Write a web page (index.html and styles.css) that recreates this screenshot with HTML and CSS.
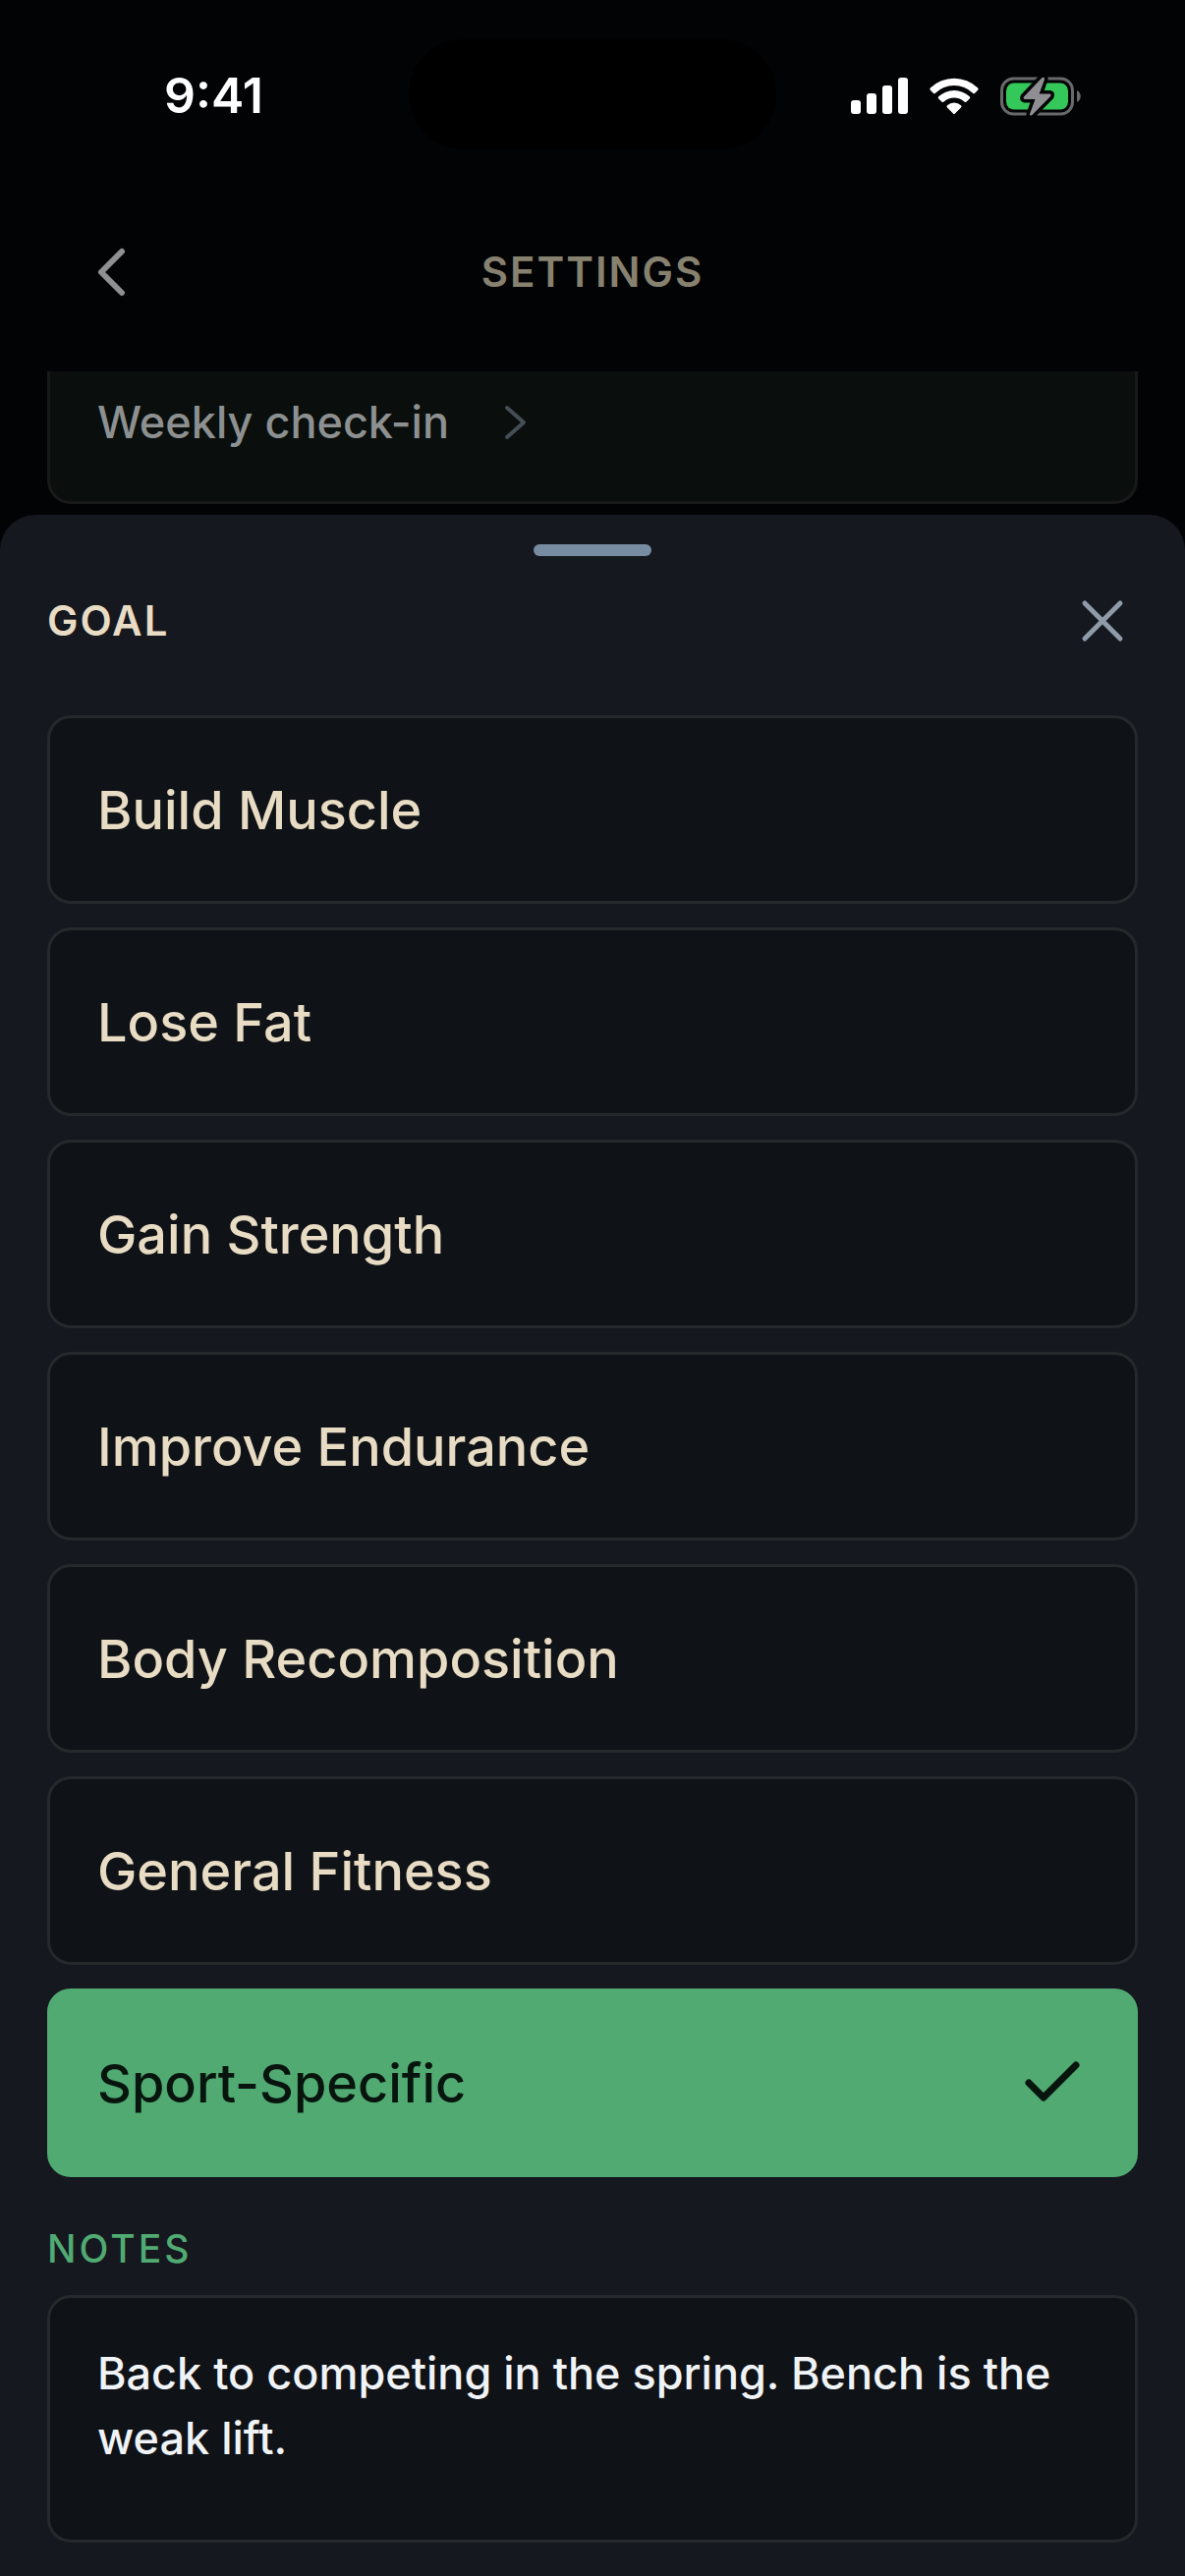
FILE: index.html
```html
<!DOCTYPE html>
<html lang="en">
<head>
    <meta charset="UTF-8">
    <meta name="viewport" content="width=device-width, initial-scale=1.0">
    <title>Settings - Goal</title>
    <link rel="stylesheet" href="styles.css">
</head>
<body>
    <div class="status-bar">
        <span class="status-time">9:41</span>
        <span class="island"></span>
        <div class="status-icons">
            <svg class="icon-signal" viewBox="0 0 58 38" aria-hidden="true">
                <rect x="0" y="23" width="10" height="14" rx="3"/>
                <rect x="16" y="16" width="10" height="21" rx="3"/>
                <rect x="32" y="8" width="10" height="29" rx="3"/>
                <rect x="48" y="0" width="10" height="37" rx="3"/>
            </svg>
            <svg class="icon-wifi" viewBox="0 0 50 38" aria-hidden="true">
                <path d="M.8 10.5a1.6 1.6 0 0 0 0 2.200l3 3a1.600 1.600 0 0 0 2.200 0a27.200 27.200 0 0 1 38 0a1.600 1.600 0 0 0 2.200 0l3-3a1.600 1.600 0 0 0 0-2.200a34.800 34.800 0 0 0-48.400 0z"/>
                <path d="M9.200 19.300a1.600 1.600 0 0 0 0 2.200l3.200 3.100a1.600 1.600 0 0 0 2.200 0a15.500 15.500 0 0 1 20.800 0a1.600 1.600 0 0 0 2.200 0l3.200-3.100a1.600 1.600 0 0 0 0-2.200a23 23 0 0 0-31.600 0z"/>
                <path d="M18 28.200a1.500 1.500 0 0 0 0 2.200l6 6.200a1.400 1.400 0 0 0 2 0l6-6.200a1.500 1.500 0 0 0 0-2.200a10.800 10.800 0 0 0-14 0z"/>
            </svg>
            <svg class="icon-battery" viewBox="0 0 83 42" aria-hidden="true">
                <rect class="battery-shell" x="1.500" y="3" width="72" height="36" rx="12"/>
                <path class="battery-shell-tip" d="M78 15c5 2 5 10 0 12z"/>
                <rect class="battery-level" x="6" y="7.500" width="63" height="27" rx="8"/>
                <path class="battery-bolt" d="M44.500 2c-.7-.6-1.700-.4-2.400.5L24 21.500c-.8 1.200-.3 2.500 1 2.500h10.500l-5.500 15c-.3 1.400 1.500 2.200 2.500 1l18.700-19c.9-1.300.3-2.500-1-2.500h-10.500L45 4c.2-.8.100-1.500-.5-2z"/>
            </svg>
        </div>
    </div>

    <header class="nav">
        <button class="back-button" type="button" aria-label="Back">
            <svg viewBox="0 0 34 50" aria-hidden="true"><path d="M28 4L7 25L28 46"/></svg>
        </button>
        <h1>Settings</h1>
    </header>

    <a class="setting-row" href="#checkin">
        <span>Weekly check-in</span>
        <svg viewBox="0 0 24 36" aria-hidden="true"><path d="M3 3L20 18L3 33"/></svg>
    </a>

    <!-- Goal sheet -->
    <main class="sheet">
        <div class="handle"></div>
        <div class="sheet-header">
            <h2 id="goalTitle">Goal</h2>
            <button class="close-button" type="button" aria-label="Close">
                <svg viewBox="0 0 42 42" aria-hidden="true"><path d="M3 3L39 39M39 3L3 39"/></svg>
            </button>
        </div>

        <div class="options" role="radiogroup" aria-labelledby="goalTitle">
            <label class="option">
                <input type="radio" name="goal">
                <span>Build Muscle</span>
            </label>
            <label class="option">
                <input type="radio" name="goal">
                <span>Lose Fat</span>
            </label>
            <label class="option">
                <input type="radio" name="goal">
                <span>Gain Strength</span>
            </label>
            <label class="option">
                <input type="radio" name="goal">
                <span>Improve Endurance</span>
            </label>
            <label class="option">
                <input type="radio" name="goal">
                <span>Body Recomposition</span>
            </label>
            <label class="option">
                <input type="radio" name="goal">
                <span>General Fitness</span>
            </label>
            <label class="option">
                <input type="radio" name="goal" checked>
                <span>Sport-Specific</span>
                <svg viewBox="0 0 56 42" aria-hidden="true"><path d="M5 21L20 36L53 3"/></svg>
            </label>
        </div>

        <label class="notes-label" for="notes">Notes</label>
        <textarea class="notes" id="notes">Back to competing in the spring. Bench is the weak lift.</textarea>
    </main>
</body>
</html>
```
FILE: styles.css
```css
* {
    margin: 0;
    padding: 0;
    box-sizing: border-box;
    font-family: Inter, "Liberation Sans", sans-serif;
}

body {
    display: flex;
    flex-direction: column;
    min-height: 100vh;
    background-color: #020305;
}

svg {
    display: block;
    overflow: visible;
    fill: none;
    stroke-linecap: round;
    stroke-linejoin: round;
}

button {
    background: none;
    border: none;
    cursor: pointer;
}

/* Status bar */
.status-bar {
    display: grid;
    grid-template-columns: 1fr 374px 1fr;
    align-items: center;
    padding: 40px 105px 0;
    height: 152px;
}

.status-time {
    padding: 2px 0 0 62px;
    color: #fff;
    font-size: 50px;
    font-weight: 600;
    line-height: 60px;
}

.island {
    height: 112px;
    border-radius: 56px;
    background-color: #000;
}

.status-icons {
    display: flex;
    justify-content: flex-end;
    align-items: center;
    gap: 22px;
    padding-top: 4px;
}

.icon-signal {
    width: 58px;
    height: 38px;
    fill: #fff;
}

.icon-wifi {
    width: 50px;
    height: 38px;
    fill: #fff;
}

.icon-battery {
    width: 83px;
    height: 42px;
}

.battery-shell {
    stroke: #68696b;
    stroke-width: 3;
}

.battery-shell-tip {
    fill: #68696b;
}

.battery-level {
    fill: #34c759;
}

.battery-bolt {
    fill: #8e8e93;
    stroke: #020305;
    stroke-width: 7;
    paint-order: stroke;
}

/* Navigation */
.nav {
    display: grid;
    grid-template-columns: 1fr auto 1fr;
    align-items: center;
    height: 226px;
    padding: 24px 96px 0;
}

.back-button svg {
    width: 34px;
    height: 50px;
    stroke: #8f9092;
    stroke-width: 6;
}

.nav h1,
.sheet h2 {
    color: #87816f;
    font-size: 42px;
    font-weight: 600;
    line-height: 52px;
    letter-spacing: 2px;
    text-transform: uppercase;
}

.setting-row {
    display: flex;
    gap: 56px;
    margin: 0 48px 11px;
    padding: 23px 48px 52px;
    border: 3px solid #171a19;
    border-top: none;
    border-radius: 0 0 24px 24px;
    background-color: #0a0e0d;
    color: #8d9090;
    font-size: 45px;
    font-weight: 500;
    line-height: 57px;
    text-decoration: none;
}

.setting-row svg {
    align-self: center;
    width: 24px;
    height: 36px;
    stroke: #454d55;
    stroke-width: 4;
}

/* Sheet */
.sheet {
    flex: 1;
    display: flex;
    flex-direction: column;
    padding: 30px 48px 34px;
    border-radius: 36px 36px 0 0;
    background-color: #15181f;
}

.handle {
    align-self: center;
    width: 120px;
    height: 12px;
    border-radius: 6px;
    background-color: #778ca0;
}

.sheet-header {
    display: flex;
    justify-content: space-between;
    align-items: center;
    height: 132px;
    margin-bottom: 30px;
}

.sheet h2 {
    color: #e8dcc4;
}

.close-button {
    padding: 15px;
}

.close-button svg {
    width: 42px;
    height: 42px;
    stroke: #8f9ba8;
    stroke-width: 5;
}

/* Goal options */
.options {
    display: flex;
    flex-direction: column;
    gap: 24px;
}

.option {
    display: flex;
    justify-content: space-between;
    align-items: center;
    height: 192px;
    padding: 0 57px 0 48px;
    border: 3px solid #25292c;
    border-radius: 24px;
    background-color: #0f1216;
    color: #e8dcc4;
    font-size: 54px;
    font-weight: 500;
    cursor: pointer;
}

.option input {
    position: absolute;
    opacity: 0;
}

.option svg {
    width: 56px;
    height: 42px;
    stroke: #08150e;
    stroke-width: 7;
}

.option:has(input:checked) {
    border-color: #50aa72;
    background-color: #50aa72;
    color: #08150e;
}

/* Notes */
.notes-label {
    margin: 49px 0 23px;
    color: #50aa72;
    font-size: 39px;
    font-weight: 500;
    line-height: 48px;
    letter-spacing: 3px;
    text-transform: uppercase;
}

.notes {
    height: 252px;
    padding: 44px 48px;
    border: 3px solid #25292c;
    border-radius: 24px;
    outline: none;
    resize: none;
    background-color: #0f1216;
    color: #f0f3f6;
    font-size: 45px;
    font-weight: 500;
    line-height: 66px;
}
```
